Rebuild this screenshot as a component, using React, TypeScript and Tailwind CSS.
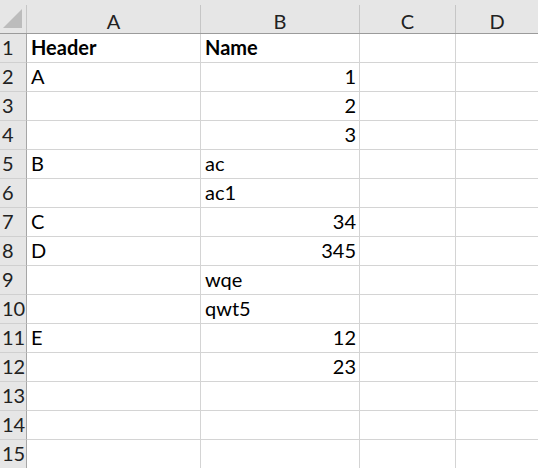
import React from "react";

const rows: [string, string, boolean][] = [
  ["Header", "Name", false],
  ["A", "1", true],
  ["", "2", true],
  ["", "3", true],
  ["B", "ac", false],
  ["", "ac1", false],
  ["C", "34", true],
  ["D", "345", true],
  ["", "wqe", false],
  ["", "qwt5", false],
  ["E", "12", true],
  ["", "23", true],
  ["", "", false],
  ["", "", false],
  ["", "", false],
];

function HeadSep() {
  return <div className="w-px mt-[5px] bg-[#c6c6c6] self-stretch shrink-0" />;
}

export default function App() {
  return (
    <div
      className="w-[538px] h-[468px] overflow-hidden bg-white text-[#000] text-[20px]"
      style={{ fontFamily: "Lato, 'Liberation Sans', sans-serif" }}
    >
      <div className="grid grid-cols-[27px_174px_159px_96px_1fr]">
        {/* header row */}
        <div className="h-[34px] bg-[#e6e6e6] border-b border-b-[#9b9b9b] flex">
          <div className="flex-1 flex items-end pl-[3px] pb-[4px]">
            <svg width="20" height="20" viewBox="0 0 20 20">
              <polygon points="19,0 19,19 0,19" fill="#bcbcbc" />
            </svg>
          </div>
          <HeadSep />
        </div>
        {["A", "B", "C", "D"].map((c, i) => (
          <div
            key={c}
            className="h-[34px] bg-[#e6e6e6] border-b border-b-[#9b9b9b] flex text-[#222]"
          >
            <div className="flex-1 flex items-end justify-center pb-[2px] leading-none">{c}</div>
            {i < 3 ? <HeadSep /> : null}
          </div>
        ))}
        {rows.map(([a, b, num], i) => (
          <React.Fragment key={i}>
            <div className="h-[29px] bg-[#e6e6e6] border-b border-b-[#d0d0d0] border-r border-r-[#a6a6a6] flex items-end pl-[2px] pb-[5px] leading-none text-[#222]">
              {i + 1}
            </div>
            <div
              className={`h-[29px] border-b border-r border-[#d4d4d4] flex items-end pl-[4px] pb-[5px] leading-none ${
                i === 0 ? "font-bold" : ""
              }`}
            >
              {a}
            </div>
            <div
              className={`h-[29px] border-b border-r border-[#d4d4d4] flex items-end pb-[5px] leading-none ${
                num ? "justify-end pr-[3px]" : "pl-[4px]"
              } ${i === 0 ? "font-bold" : ""}`}
            >
              {b}
            </div>
            <div className="h-[29px] border-b border-r border-[#d4d4d4]" />
            <div className="h-[29px] border-b border-[#d4d4d4]" />
          </React.Fragment>
        ))}
      </div>
    </div>
  );
}
